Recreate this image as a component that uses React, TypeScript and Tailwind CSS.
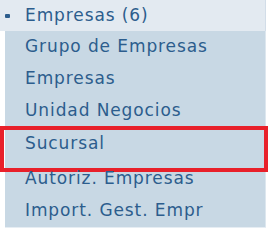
const items = [
  'Grupo de Empresas',
  'Empresas',
  'Unidad Negocios',
  'Sucursal',
  'Autoriz. Empresas',
  'Import. Gest. Empr',
];

export default function App() {
  return (
    <div className="w-[269px] h-[233px] bg-white overflow-hidden font-['DejaVu_Sans',Verdana,sans-serif] text-[17px] tracking-[0.9px] text-[#2c5d8d]">
      <div className="w-[266px] h-[31px] bg-[#e3eaf1] border-r border-[#d2dde8] flex items-center">
        <span className="ml-[5px] w-[5px] h-[4px] rounded-[1px] bg-[#2c5d8d]" />
        <span className="ml-[15px]">Empresas (6)</span>
      </div>
      <div className="ml-[5px] w-[261px] bg-[#c8d8e4] border-r border-[#dde7ef]">
        {items.map((label) => (
          <div
            key={label}
            className={`relative flex items-center pl-[20px] ${
              label === 'Sucursal' ? 'h-[36px] pb-[2px]' : 'h-[32px]'
            }`}
          >
            {label}
            {label === 'Sucursal' && (
              <div className="absolute left-[-5px] right-[-3px] top-[-1px] h-[46px] border-[4px] border-[#e8202a] pointer-events-none" />
            )}
          </div>
        ))}
      </div>
      <div className="ml-[5px] w-[261px] h-px bg-[#e6edf3]" />
    </div>
  );
}
